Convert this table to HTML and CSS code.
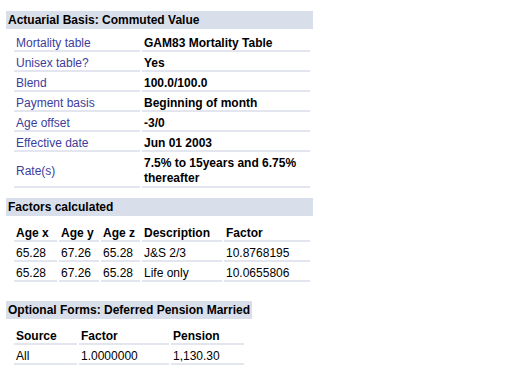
FILE: index.html
```html
<!DOCTYPE html>
<html>
<head>
<meta charset="utf-8">
<link rel="stylesheet" href="styles.css">
</head>
<body>
<div class="page">
  <section class="sec sec-basis">
    <div class="head head-wide">Actuarial Basis: Commuted Value</div>
    <table class="grid grid-basis">
      <colgroup><col class="c126"><col class="c168"></colgroup>
      <tr><td class="lbl">Mortality table</td><td class="val">GAM83 Mortality Table</td></tr>
      <tr><td class="lbl">Unisex table?</td><td class="val">Yes</td></tr>
      <tr><td class="lbl">Blend</td><td class="val">100.0/100.0</td></tr>
      <tr><td class="lbl">Payment basis</td><td class="val">Beginning of month</td></tr>
      <tr><td class="lbl">Age offset</td><td class="val">-3/0</td></tr>
      <tr><td class="lbl">Effective date</td><td class="val">Jun 01 2003</td></tr>
      <tr><td class="lbl">Rate(s)</td><td class="val val-multi">7.5% to 15years and 6.75% thereafter</td></tr>
    </table>
  </section>

  <section class="sec sec-factors">
    <div class="head head-wide">Factors calculated</div>
    <table class="grid grid-factors">
      <colgroup><col class="c43"><col class="c40"><col class="c39"><col class="c80"><col class="c86"></colgroup>
      <tr><th>Age x</th><th>Age y</th><th>Age z</th><th>Description</th><th>Factor</th></tr>
      <tr><td>65.28</td><td>67.26</td><td>65.28</td><td>J&amp;S 2/3</td><td>10.8768195</td></tr>
      <tr><td>65.28</td><td>67.26</td><td>65.28</td><td>Life only</td><td>10.0655806</td></tr>
    </table>
  </section>

  <section class="sec sec-optional">
    <div class="head head-fit">Optional Forms: Deferred Pension Married</div>
    <table class="grid grid-optional">
      <colgroup><col class="c63"><col class="c90"><col class="c73"></colgroup>
      <tr><th>Source</th><th>Factor</th><th>Pension</th></tr>
      <tr><td>All</td><td>1.0000000</td><td>1,130.30</td></tr>
    </table>
  </section>
</div>
</body>
</html>
```

FILE: styles.css
```css
html, body {
  margin: 0;
  padding: 0;
  background: #ffffff;
}
body {
  font-family: "Liberation Sans", Arial, sans-serif;
  font-size: 12px;
  color: #000000;
}
.page {
  padding: 11px 6px 0 6px;
}
.sec {
  display: flex;
  flex-direction: column;
  align-items: flex-start;
}
.sec-factors {
  margin-top: 8px;
}
.sec-optional {
  margin-top: 17px;
}
.head {
  background: #d9dfea;
  font-weight: bold;
  height: 18px;
  line-height: 18px;
  padding: 0 2px;
  box-sizing: border-box;
  white-space: nowrap;
}
.head-wide {
  width: 307px;
}
.head-fit {
  display: inline-block;
}
.grid {
  border-collapse: separate;
  border-spacing: 2px;
  margin-left: 6px;
  margin-top: 3px;
  table-layout: fixed;
}
.grid td, .grid th {
  border-bottom: 2px solid #e3e6ee;
  padding: 2px 2px 0 2px;
  line-height: 14px;
  text-align: left;
  vertical-align: middle;
  white-space: nowrap;
}
.grid th {
  font-weight: bold;
  padding-top: 5px;
}
.grid-basis .lbl {
  color: #3d3d9c;
}
.grid-basis .val {
  font-weight: bold;
  white-space: normal;
}
.grid-basis .val-multi {
  line-height: 15px;
  padding-top: 2px;
}
.c126 { width: 126px; }
.c168 { width: 168px; }
.c43 { width: 43px; }
.c40 { width: 40px; }
.c39 { width: 39px; }
.c80 { width: 80px; }
.c86 { width: 86px; }
.c63 { width: 63px; }
.c90 { width: 90px; }
.c73 { width: 73px; }
```
